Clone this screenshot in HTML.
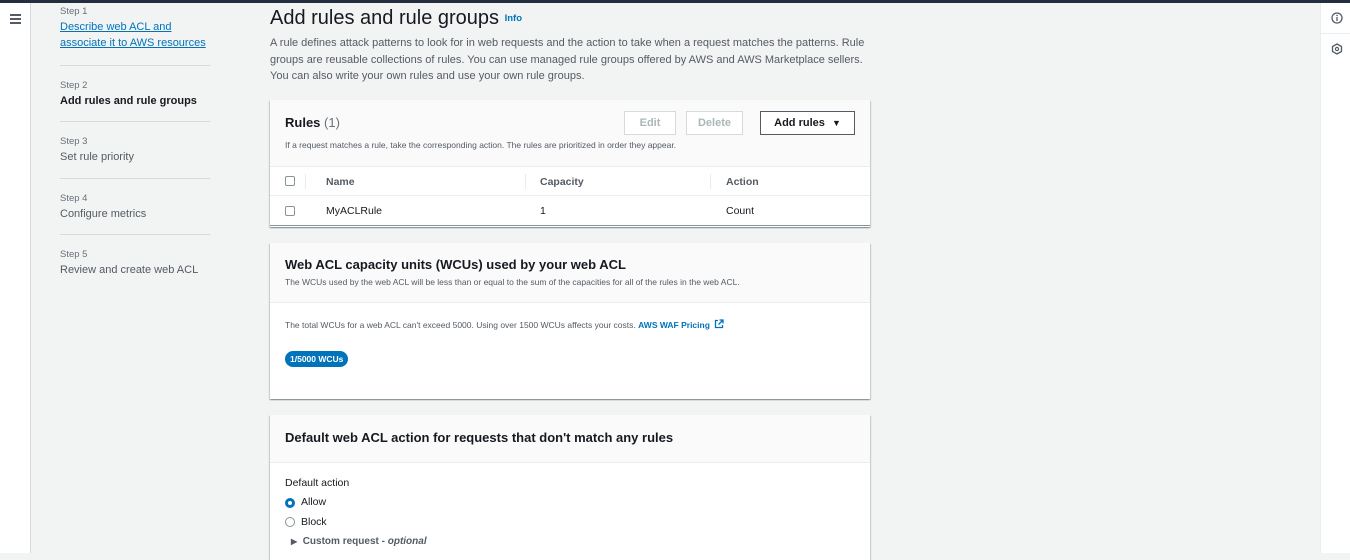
<!DOCTYPE html>
<html><head><meta charset="utf-8"><style>
*{margin:0;padding:0;box-sizing:border-box}
body{width:1350px;height:553px;overflow:hidden;background:#f2f3f3;font-family:"Liberation Sans",sans-serif;color:#16191f;position:relative}
.abs{position:absolute}
.top{left:0;top:0;width:1350px;height:3px;background:#232f3e}
.lside{left:0;top:3px;width:31px;height:550px;background:#fff;border-right:1px solid #d5dbdb}
.rside{left:1320px;top:3px;width:30px;height:550px;background:#fff;border-left:1px solid #eaeded}
.step{left:60px;font-size:9.5px;color:#687078}
.sl{left:60px;font-size:11px;color:#545b64;line-height:16px}
.hr{left:60px;width:150px;height:1px;background:#d5dbdb}
.card{left:270px;width:600px;background:#fff;box-shadow:0 1px 1px rgba(0,28,36,.3),1px 1px 1px rgba(0,28,36,.15),-1px 1px 1px rgba(0,28,36,.15)}
.hd{background:#fafafa;border-bottom:1px solid #eaeded}
.btn{height:24px;border:1px solid #d5dbdb;font-size:11px;font-weight:bold;color:#aab7b8;text-align:center;line-height:22px;background:#fff}
.cb{width:10px;height:10px;border:1px solid #879596;border-radius:2px}
.th{font-size:10.5px;font-weight:bold;color:#545b64}
.td{font-size:10.5px;color:#16191f}
</style></head><body>
<div class="abs top"></div>
<div class="abs lside"><div class="abs" style="left:10px;top:11px;width:11px">
<div style="height:1.5px;background:#545b64;margin-bottom:2.5px"></div><div style="height:1.5px;background:#545b64;margin-bottom:2.5px"></div><div style="height:1.5px;background:#545b64"></div></div></div>
<div class="abs rside">
<svg class="abs" style="left:10px;top:9px" width="12" height="12" viewBox="0 0 12 12"><circle cx="6" cy="6" r="5" fill="none" stroke="#545b64" stroke-width="1.3"/><line x1="6" y1="5" x2="6" y2="9" stroke="#545b64" stroke-width="1.3"/><circle cx="6" cy="3.4" r=".8" fill="#545b64"/></svg>
<div class="abs" style="left:0;top:30px;width:30px;height:1px;background:#eaeded"></div>
<svg class="abs" style="left:10px;top:40px" width="12" height="12" viewBox="0 0 12 12"><path d="M6 1L10.5 3.5V8.5L6 11L1.5 8.5V3.5Z" fill="none" stroke="#545b64" stroke-width="1.3"/><circle cx="6" cy="6" r="1.6" fill="none" stroke="#545b64" stroke-width="1.2"/></svg>
</div>

<div class="abs step" style="top:6px">Step 1</div>
<div class="abs sl" style="top:19px;color:#0073bb;text-decoration:underline">Describe web ACL and<br>associate it to AWS resources</div>
<div class="abs hr" style="top:65px"></div>
<div class="abs step" style="top:80px">Step 2</div>
<div class="abs sl" style="top:93px;color:#16191f;font-weight:bold">Add rules and rule groups</div>
<div class="abs hr" style="top:121px"></div>
<div class="abs step" style="top:136px">Step 3</div>
<div class="abs sl" style="top:149px">Set rule priority</div>
<div class="abs hr" style="top:178px"></div>
<div class="abs step" style="top:193px">Step 4</div>
<div class="abs sl" style="top:206px">Configure metrics</div>
<div class="abs hr" style="top:234px"></div>
<div class="abs step" style="top:249px">Step 5</div>
<div class="abs sl" style="top:262px">Review and create web ACL</div>

<div class="abs" style="left:270px;top:7px;font-size:20px;color:#16191f">Add rules and rule groups <span style="font-size:9.5px;font-weight:bold;color:#0073bb;vertical-align:3px">Info</span></div>
<div class="abs" style="left:270px;top:35px;width:600px;font-size:11px;line-height:16.5px;color:#545b64">A rule defines attack patterns to look for in web requests and the action to take when a request matches the patterns. Rule groups are reusable collections of rules. You can use managed rule groups offered by AWS and AWS Marketplace sellers. You can also write your own rules and use your own rule groups.</div>

<div class="abs card" style="top:100px;height:127px">
<div class="hd" style="height:67px;position:relative">
<div class="abs" style="left:15px;top:15px;font-size:13px;font-weight:bold">Rules <span style="font-weight:normal;color:#687078">(1)</span></div>
<div class="abs" style="left:15px;top:40px;font-size:8.5px;color:#545b64">If a request matches a rule, take the corresponding action. The rules are prioritized in order they appear.</div>
<div class="abs btn" style="left:354px;top:11px;width:52px">Edit</div>
<div class="abs btn" style="left:416px;top:11px;width:57px">Delete</div>
<div class="abs btn" style="left:490px;top:11px;width:95px;border-color:#545b64;color:#16191f">Add rules <span style="font-size:9px;margin-left:4px">▼</span></div>
</div>
<div style="position:relative;height:29px;border-bottom:1px solid #eaeded">
<div class="abs cb" style="left:15px;top:9px"></div>
<div class="abs" style="left:35px;top:7px;width:1px;height:15px;background:#eaeded"></div>
<div class="abs th" style="left:56px;top:9px">Name</div>
<div class="abs" style="left:255px;top:7px;width:1px;height:15px;background:#eaeded"></div>
<div class="abs th" style="left:270px;top:9px">Capacity</div>
<div class="abs" style="left:440px;top:7px;width:1px;height:15px;background:#eaeded"></div>
<div class="abs th" style="left:456px;top:9px">Action</div>
</div>
<div style="position:relative;height:30px;border-bottom:1px solid #879596">
<div class="abs cb" style="left:15px;top:10px"></div>
<div class="abs td" style="left:56px;top:9px">MyACLRule</div>
<div class="abs td" style="left:270px;top:9px">1</div>
<div class="abs td" style="left:456px;top:9px">Count</div>
</div>
</div>

<div class="abs card" style="top:243px;height:156px">
<div class="hd" style="height:60px;position:relative">
<div class="abs" style="left:15px;top:14px;font-size:13px;font-weight:bold">Web ACL capacity units (WCUs) used by your web ACL</div>
<div class="abs" style="left:15px;top:34px;font-size:8.5px;color:#545b64">The WCUs used by the web ACL will be less than or equal to the sum of the capacities for all of the rules in the web ACL.</div>
</div>
<div class="abs" style="left:15px;top:76px;font-size:8.5px;color:#545b64">The total WCUs for a web ACL can't exceed 5000. Using over 1500 WCUs affects your costs. <b style="color:#0073bb">AWS WAF Pricing</b> <svg width="10" height="10" viewBox="0 0 10 10" style="vertical-align:-1px;margin-left:2px"><path d="M4 1.5H1.5V8.5H8.5V6M5.5 1H9V4.5M9 1L4.5 5.5" fill="none" stroke="#0073bb" stroke-width="1.3"/></svg></div>
<div class="abs" style="left:15px;top:108px;height:16px;padding:0 5px;border-radius:8px;background:#0073bb;color:#fff;font-size:8.5px;font-weight:bold;line-height:16px">1/5000 WCUs</div>
</div>

<div class="abs card" style="top:415px;height:145px">
<div class="hd" style="height:48px;position:relative">
<div class="abs" style="left:15px;top:15px;font-size:13px;font-weight:bold">Default web ACL action for requests that don't match any rules</div>
</div>
<div class="abs" style="left:15px;top:62px;font-size:10.5px">Default action</div>
<div class="abs" style="left:15px;top:83px;width:10px;height:10px;border-radius:50%;border:3px solid #0073bb"></div>
<div class="abs" style="left:31px;top:81px;font-size:10.5px">Allow</div>
<div class="abs" style="left:15px;top:102px;width:10px;height:10px;border-radius:50%;border:1px solid #879596"></div>
<div class="abs" style="left:31px;top:101px;font-size:10.5px">Block</div>
<div class="abs" style="left:21px;top:121px;font-size:10px;font-weight:bold;color:#545b64"><span style="font-size:8px">▶</span>&nbsp; Custom request - <i>optional</i></div>
</div>
</body></html>
